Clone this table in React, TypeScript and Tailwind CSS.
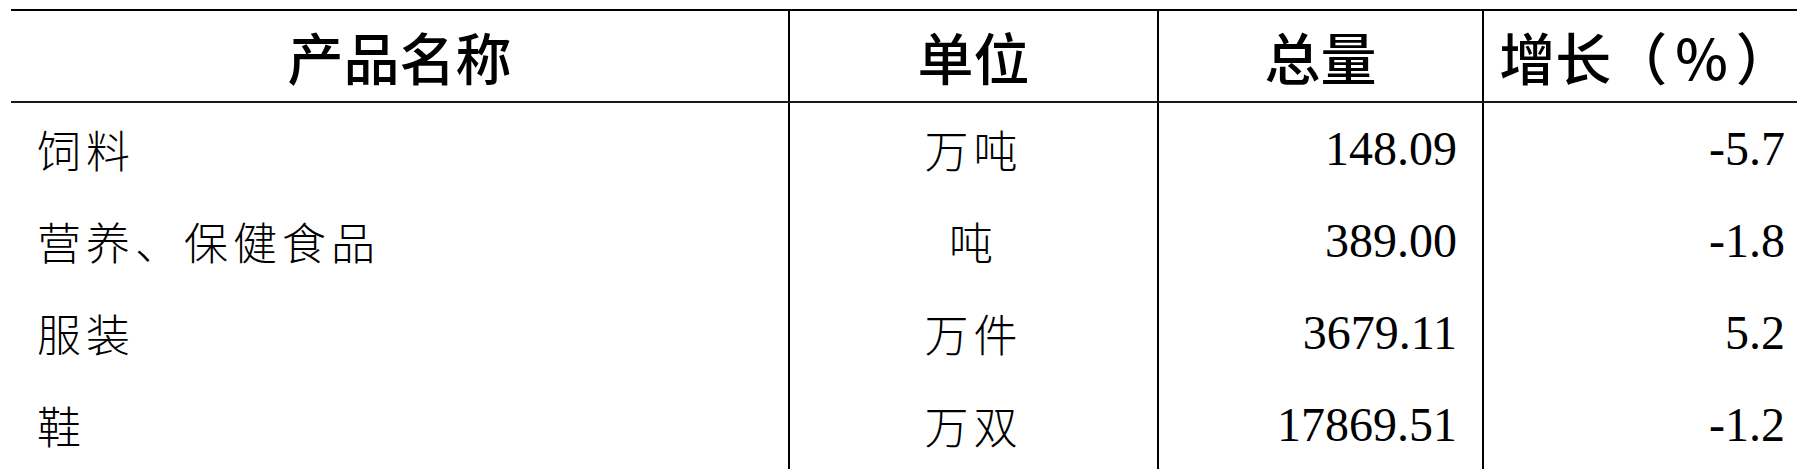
import React from "react";

const cjkBody = "font-['Noto_Sans_CJK_SC',sans-serif] font-light text-[44px] tracking-[5px] leading-none text-black";
const num = "font-['Liberation_Serif',serif] text-[48px] leading-none text-black";
const head = "font-['Noto_Sans_CJK_SC',sans-serif] font-medium text-[56px] leading-none text-black whitespace-nowrap";

const rows = [
  { name: "饲料", unit: "万吨", total: "148.09", growth: "-5.7" },
  { name: "营养、保健食品", unit: "吨", total: "389.00", growth: "-1.8" },
  { name: "服装", unit: "万件", total: "3679.11", growth: "5.2" },
  { name: "鞋", unit: "万双", total: "17869.51", growth: "-1.2" },
];

export default function App() {
  return (
    <div className="w-[1797px] h-[469px] overflow-hidden bg-white">
      <div className="ml-[11px] mt-[9px] border-t-2 border-black">
        <div className="grid grid-cols-[777px_369px_325px_1fr] h-[92px] border-b-2 border-[#1a1a1a]">
          <div className={`flex items-center justify-center ${head}`}>产品名称</div>
          <div className={`flex items-center justify-center border-l-2 border-black ${head}`}>单位</div>
          <div className={`flex items-center justify-center border-l-2 border-black ${head}`}>总量</div>
          <div className={`flex items-center justify-center border-l-2 border-black ${head}`}>
            <span className="whitespace-nowrap pl-[10px]">增长（<span className="mx-[8px]">%</span>）</span>
          </div>
        </div>
        {rows.map((r) => (
          <div key={r.name} className="grid grid-cols-[777px_369px_325px_1fr] h-[92px]">
            <div className={`flex items-center pl-[26px] ${cjkBody}`}>{r.name}</div>
            <div className={`flex items-center justify-center border-l-2 border-black ${cjkBody}`}>{r.unit}</div>
            <div className={`flex items-center justify-end pr-[25px] border-l-2 border-black ${num}`}>{r.total}</div>
            <div className={`flex items-center justify-end pr-[12px] border-l-2 border-black ${num}`}>{r.growth}</div>
          </div>
        ))}
      </div>
    </div>
  );
}
